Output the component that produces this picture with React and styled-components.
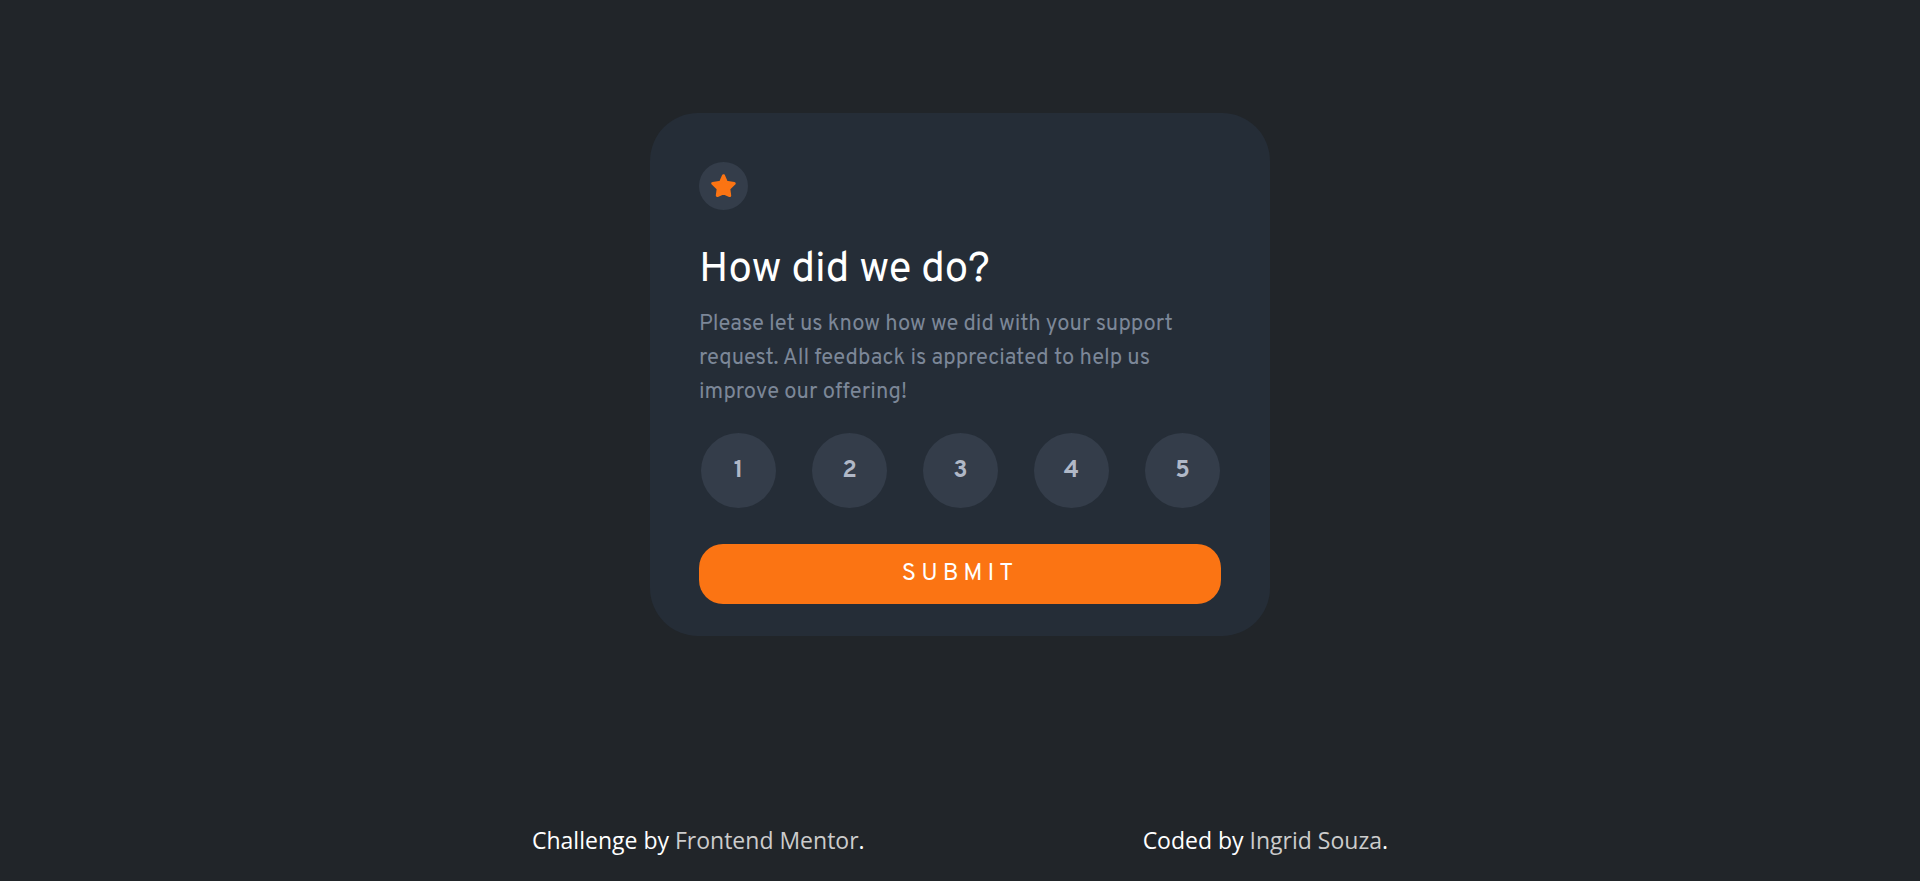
import React, { useState } from "react";
import styled, { createGlobalStyle } from "styled-components";

const GlobalStyle = createGlobalStyle`
  * { box-sizing: border-box; }
  body { margin: 0; background: #212529; }
`;

const Page = styled.div`
  min-height: 100vh;
  display: flex;
  flex-direction: column;
  align-items: center;
  justify-content: space-between;
  padding: 113px 16px 23px;
  color: #fff;
  font-family: Overpass, Roboto, sans-serif;
`;

const Card = styled.form`
  width: 100%;
  max-width: 620px;
  padding: 49px 49px 32px;
  border-radius: 48px;
  background: #252d37;
`;

const Badge = styled.div`
  width: 49px;
  height: 48px;
  border-radius: 50%;
  display: grid;
  place-items: center;
  background: #343d4a;
`;

const Title = styled.h1`
  margin: 36px 0 12px;
  font-size: 42px;
  line-height: 50px;
  font-weight: 400;
`;

const Description = styled.p`
  margin: 0;
  font-size: 22px;
  line-height: 34px;
  color: #7c8798;
`;

const Ratings = styled.fieldset`
  display: flex;
  justify-content: space-between;
  margin: 23px 0 36px;
  padding: 0 1px 0 2px;
  border: 0;
`;

const Rating = styled.button`
  width: 75px;
  height: 75px;
  padding: 0;
  border: 0;
  border-radius: 50%;
  background: ${(p) => (p.$selected ? "#7c8798" : "#343d4a")};
  color: ${(p) => (p.$selected ? "#fff" : "#b0b8c7")};
  font: 700 24px Overpass, Roboto, sans-serif;
  cursor: pointer;
`;

const Submit = styled.button`
  display: block;
  width: 100%;
  height: 60px;
  padding: 0;
  border: 0;
  border-radius: 24px;
  background: #fb7413;
  color: #fff;
  font: 400 24px Overpass, Roboto, sans-serif;
  letter-spacing: 5px;
  cursor: pointer;
`;

const Footer = styled.footer`
  display: flex;
  flex-wrap: wrap;
  justify-content: center;
  gap: 16px 278px;
  font: 400 23px/36px "Segoe UI", "Open Sans", sans-serif;
`;

const Credit = styled.span``;

const CreditLink = styled.a`
  color: #ccc;
  text-decoration: none;
`;

export default function App() {
  const [rating, setRating] = useState(null);
  return (
    <Page>
      <GlobalStyle />
      <Card onSubmit={(e) => e.preventDefault()}>
        <Badge>
          <svg width="25" height="24" viewBox="0 0 25 24" aria-hidden="true">
            <path
              fill="#fb7413"
              stroke="#fb7413"
              strokeWidth="3"
              strokeLinejoin="round"
              d="M12.5 1.7 15.3 8.2 23.2 9.4 17.8 14.8 18.7 21.5 12.5 18.9 6.3 21.5 7.2 14.8 1.8 9.4 9.7 8.2Z"
            />
          </svg>
        </Badge>
        <Title>How did we do?</Title>
        <Description>
          Please let us know how we did with your support request. All feedback
          is appreciated to help us improve our offering!
        </Description>
        <Ratings aria-label="Rating">
          {[1, 2, 3, 4, 5].map((n) => (
            <Rating
              key={n}
              type="button"
              aria-pressed={rating === n}
              $selected={rating === n}
              onClick={() => setRating(n)}
            >
              {n}
            </Rating>
          ))}
        </Ratings>
        <Submit type="submit">SUBMIT</Submit>
      </Card>
      <Footer>
        <Credit>
          Challenge by <CreditLink href="#mentor">Frontend Mentor</CreditLink>.
        </Credit>
        <Credit>
          Coded by <CreditLink href="#author">Ingrid Souza</CreditLink>.
        </Credit>
      </Footer>
    </Page>
  );
}
